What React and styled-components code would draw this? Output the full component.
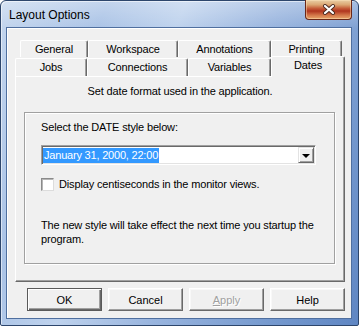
import React from "react";
import styled, { createGlobalStyle, css } from "styled-components";

const GlobalStyle = createGlobalStyle`
  html, body {
    margin: 0;
    padding: 0;
    background: #ffffff;
  }
  body {
    font-family: "Liberation Sans", Arial, sans-serif;
    font-size: 11px;
    color: #000;
  }
`;

const Window = styled.div`
  width: 359px;
  height: 326px;
  box-sizing: border-box;
  border: 1px solid #2d466c;
  border-radius: 6px 6px 2px 2px;
  background:
    linear-gradient(to bottom, rgba(255, 255, 255, 0.3), rgba(255, 255, 255, 0) 28px),
    linear-gradient(112deg, #c4d6ee 0%, #aac3e6 22%, #bed2ed 38%, #98b4de 58%, #7599ce 82%, #5f86c3 100%);
  box-shadow: inset 1px 1px 0 rgba(255, 255, 255, 0.55);
  display: flex;
  flex-direction: column;
`;

const TitleBar = styled.div`
  height: 26px;
  display: flex;
  align-items: flex-start;
  padding-left: 8px;
`;

const Title = styled.div`
  font-size: 12px;
  line-height: 16px;
  margin-top: 6px;
  color: #000;
`;

const CloseButton = styled.div`
  margin-left: auto;
  margin-right: 6px;
  margin-top: -1px;
  width: 47px;
  height: 20px;
  box-sizing: border-box;
  border: 1px solid #6a2718;
  border-top: none;
  border-radius: 0 0 4px 4px;
  background: linear-gradient(
    to bottom,
    #e9cfa6 0%,
    #dca774 25%,
    #c45a37 45%,
    #b0351f 58%,
    #d3774a 80%,
    #e8a66a 100%
  );
  box-shadow: inset 0 0 0 1px rgba(255, 230, 190, 0.45);
  display: flex;
  align-items: center;
  justify-content: center;
`;

const Client = styled.div`
  margin: 0 6px 6px 5px;
  height: 292px;
  box-sizing: border-box;
  border: 1px solid #4f6f9f;
  background: #f0f0f0;
  box-shadow: inset 1px 1px 0 #ffffff;
  padding: 12px 6px 0 8px;
  display: flex;
  flex-direction: column;
`;

const TabRow = styled.div`
  display: flex;
  align-items: flex-end;
  height: ${(p) => p.$height}px;
  padding-left: ${(p) => p.$offset}px;
`;

const Tab = styled.div`
  position: relative;
  width: ${(p) => p.$width}px;
  height: ${(p) => (p.$active ? 21 : p.$height)}px;
  box-sizing: border-box;
  border-top: 1px solid #ffffff;
  border-left: 1px solid #ffffff;
  border-right: 1px solid #696969;
  border-radius: 2px 2px 0 0;
  box-shadow: inset -1px 0 0 #a0a0a0;
  background: #f0f0f0;
  text-align: center;
  line-height: ${(p) => (p.$active ? 16 : p.$height - 1)}px;
  letter-spacing: -0.15px;
  ${(p) =>
    p.$active &&
    css`
      z-index: 1;
      margin-bottom: -1px;
    `}
`;

const TabPanel = styled.div`
  height: 206px;
  box-sizing: border-box;
  border: 1px solid;
  border-color: #ffffff #696969 #696969 #ffffff;
  box-shadow: inset -1px -1px 0 #a0a0a0;
  padding: 8px 0 0 8px;
  display: flex;
  flex-direction: column;
`;

const Header = styled.div`
  line-height: 13px;
  text-align: center;
  padding-right: 8px;
  letter-spacing: -0.15px;
`;

const GroupBox = styled.div`
  margin-top: 14px;
  width: 311px;
  height: 152px;
  box-sizing: border-box;
  border: 1px solid #a0a0a0;
  box-shadow: inset 1px 1px 0 #ffffff, 1px 1px 0 #ffffff;
  padding: 8px 0 0 16px;
  display: flex;
  flex-direction: column;
`;

const Label = styled.div`
  line-height: 13px;
  letter-spacing: -0.15px;
`;

const ComboBox = styled.div`
  margin-top: 11px;
  width: 275px;
  height: 20px;
  box-sizing: border-box;
  border: 1px solid;
  border-color: #a0a0a0 #ffffff #ffffff #a0a0a0;
  box-shadow: inset 1px 1px 0 #696969, inset -1px -1px 0 #e3e3e3;
  background: #ffffff;
  padding: 1px;
  display: flex;
  align-items: center;
`;

const Selection = styled.span`
  background: #3399ff;
  color: #ffffff;
  line-height: 15px;
  padding: 0 1px 0 1px;
  letter-spacing: -0.2px;
`;

const DropButton = styled.div`
  margin-left: auto;
  width: 16px;
  height: 16px;
  box-sizing: border-box;
  border: 1px solid;
  border-color: #e3e3e3 #696969 #696969 #e3e3e3;
  box-shadow: inset 1px 1px 0 #ffffff, inset -1px -1px 0 #a0a0a0;
  background: #f0f0f0;
  display: flex;
  align-items: center;
  justify-content: center;
`;

const Arrow = styled.span`
  width: 0;
  height: 0;
  border-left: 4px solid transparent;
  border-right: 4px solid transparent;
  border-top: 4px solid #000;
  margin-top: 1px;
`;

const CheckRow = styled.label`
  margin-top: 13px;
  display: flex;
  align-items: center;
  gap: 5px;
  line-height: 13px;
  letter-spacing: -0.15px;
`;

const CheckBox = styled.span`
  width: 13px;
  height: 13px;
  box-sizing: border-box;
  border: 1px solid;
  border-color: #8a8a8a #dcdcdc #dcdcdc #8a8a8a;
  box-shadow: inset 1px 1px 0 #b5b5b5;
  background: #ffffff;
`;

const Note = styled.div`
  margin-top: 27px;
  line-height: 14px;
  width: 290px;
  letter-spacing: -0.15px;
`;

const ButtonRow = styled.div`
  margin-top: 6px;
  display: flex;
  justify-content: flex-end;
  gap: 6px;
`;

const Button = styled.div`
  width: 75px;
  height: 23px;
  box-sizing: border-box;
  border: 1px solid;
  border-color: #ffffff #696969 #696969 #ffffff;
  box-shadow: inset -1px -1px 0 #a0a0a0, inset 1px 1px 0 #f8f8f8;
  background: #f0f0f0;
  display: flex;
  align-items: center;
  justify-content: center;
  color: #000;
  ${(p) =>
    p.$default &&
    css`
      border-color: #5a5a5a;
      box-shadow: inset 1px 1px 0 #ffffff, inset -1px -1px 0 #696969,
        inset -2px -2px 0 #a0a0a0;
    `}
  ${(p) =>
    p.$disabled &&
    css`
      color: #a0a0a0;
      text-shadow: 1px 1px 0 #ffffff;
    `}

  u {
    text-decoration: underline;
  }
`;

const backTabs = [
  { label: "General", width: 68 },
  { label: "Workspace", width: 90 },
  { label: "Annotations", width: 93 },
  { label: "Printing", width: 71 },
];

const frontTabs = [
  { label: "Jobs", width: 72 },
  { label: "Connections", width: 101 },
  { label: "Variables", width: 83 },
  { label: "Dates", width: 74, active: true },
];

const CloseIcon = () => (
  <svg width="14" height="11" viewBox="0 0 14 11">
    <path d="M3 2 L11 9 M11 2 L3 9" stroke="#4a2a20" strokeWidth="4" strokeLinecap="round" />
    <path d="M3 2 L11 9 M11 2 L3 9" stroke="#ffffff" strokeWidth="2.2" strokeLinecap="round" />
  </svg>
);

const App = () => {
  return (
    <>
      <GlobalStyle />
      <Window>
        <TitleBar>
          <Title>Layout Options</Title>
          <CloseButton>
            <CloseIcon />
          </CloseButton>
        </TitleBar>
        <Client>
          <TabRow $height={17} $offset={5}>
            {backTabs.map((t) => (
              <Tab key={t.label} $width={t.width} $height={17}>
                {t.label}
              </Tab>
            ))}
          </TabRow>
          <TabRow $height={19} $offset={0}>
            {frontTabs.map((t) => (
              <Tab key={t.label} $width={t.width} $height={18} $active={t.active}>
                {t.label}
              </Tab>
            ))}
          </TabRow>
          <TabPanel>
            <Header>Set date format used in the application.</Header>
            <GroupBox>
              <Label>Select the DATE style below:</Label>
              <ComboBox>
                <Selection>January 31, 2000, 22:00</Selection>
                <DropButton>
                  <Arrow />
                </DropButton>
              </ComboBox>
              <CheckRow>
                <CheckBox />
                Display centiseconds in the monitor views.
              </CheckRow>
              <Note>
                The new style will take effect the next time you startup the
                program.
              </Note>
            </GroupBox>
          </TabPanel>
          <ButtonRow>
            <Button $default>OK</Button>
            <Button>Cancel</Button>
            <Button $disabled>
              <span>
                <u>A</u>pply
              </span>
            </Button>
            <Button>Help</Button>
          </ButtonRow>
        </Client>
      </Window>
    </>
  );
};

export default App;
